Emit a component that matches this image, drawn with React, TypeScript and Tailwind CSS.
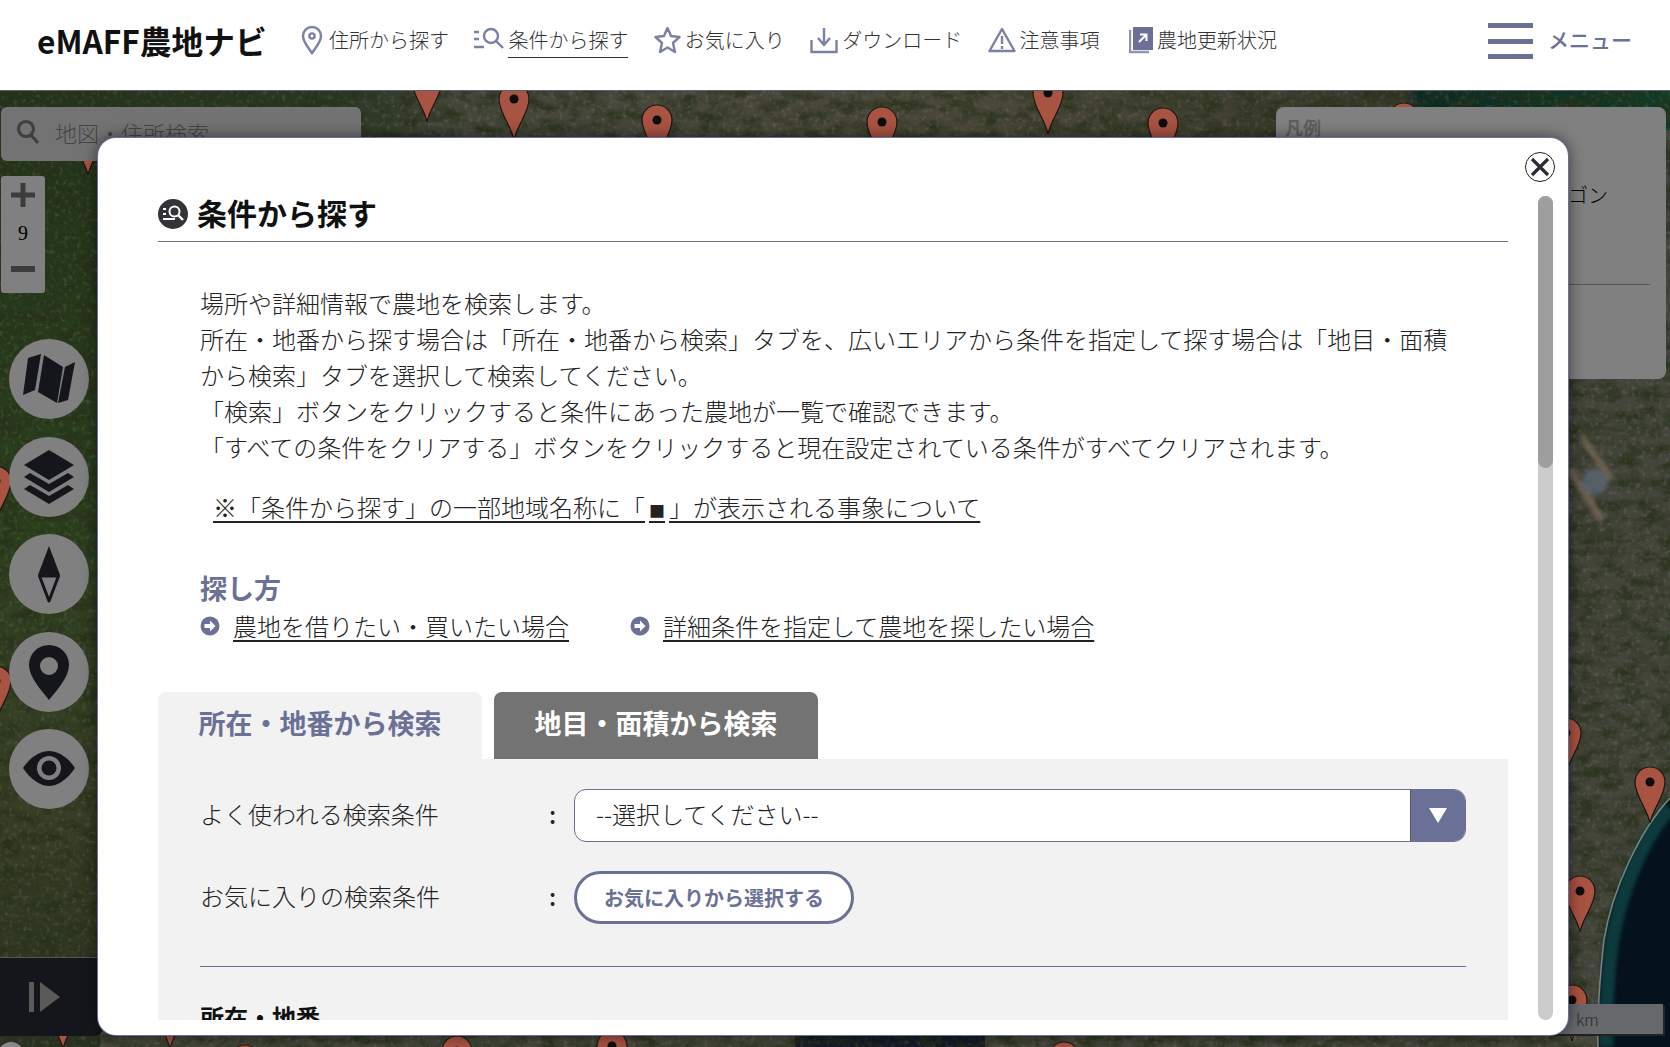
import React from 'react';

const PURPLE = '#6b7096';

// map pins, x / y of the dot
const pins = [
  [427, 81], [514, 99], [657, 120], [882, 122], [1048, 93], [1163, 123], [1404, 118],
  [88, 134], [-4, 481], [-4, 681], [1650, 782], [1580, 891], [1566, 733], [1572, 1000],
  [63, 1008], [170, 1008], [245, 1060], [457, 1051], [612, 1046], [1064, 1057],
];

const MapBackground = () => (
  <svg className="absolute left-0 top-0 w-full h-full" viewBox="0 0 1670 1047" preserveAspectRatio="none">
    <defs>
      <filter id="terrain" x="0" y="0" width="100%" height="100%">
        <feTurbulence type="fractalNoise" baseFrequency="0.05 0.09" numOctaves="5" seed="8" />
        <feColorMatrix type="matrix" values="0 0 0 0 0.02  0 0 0 0 0.03  0 0 0 0 0.01  2.6 0 0 0 -1.0" />
      </filter>
      <filter id="speck" x="0" y="0" width="100%" height="100%">
        <feTurbulence type="fractalNoise" baseFrequency="0.22" numOctaves="3" seed="3" />
        <feColorMatrix type="matrix" values="0 0 0 0 0.7  0 0 0 0 0.72  0 0 0 0 0.6  1.8 0 0 0 -0.95" />
      </filter>
      <filter id="soft"><feGaussianBlur stdDeviation="2" /></filter>
      <linearGradient id="top" x1="0" y1="0" x2="1" y2="0">
        <stop offset="0" stopColor="#24331c" />
        <stop offset="0.2" stopColor="#2a3622" />
        <stop offset="0.28" stopColor="#45463b" />
        <stop offset="0.6" stopColor="#4a4739" />
        <stop offset="0.84" stopColor="#37382a" />
        <stop offset="0.85" stopColor="#0b2a22" />
        <stop offset="1" stopColor="#123a24" />
      </linearGradient>
      <linearGradient id="left" x1="0" y1="0" x2="0" y2="1">
        <stop offset="0" stopColor="#223219" />
        <stop offset="0.45" stopColor="#2a3f1c" />
        <stop offset="0.75" stopColor="#383e26" />
        <stop offset="1" stopColor="#283120" />
      </linearGradient>
    </defs>
    <rect x="0" y="91" width="1670" height="956" fill="url(#left)" />
    <rect x="0" y="91" width="1670" height="48" fill="url(#top)" />
    <rect x="1400" y="130" width="270" height="917" fill="#43443a" />
    <rect x="100" y="1030" width="1570" height="17" fill="#45473c" />
    <rect x="795" y="1034" width="190" height="13" fill="#141a26" />
    <rect x="0" y="91" width="1670" height="956" filter="url(#terrain)" opacity="0.8" />
    <rect x="0" y="91" width="1670" height="956" filter="url(#speck)" opacity="0.22" />
    <path d="M1670 798 C1640 830 1612 890 1604 940 C1600 975 1597 1010 1598 1047 L1670 1047 Z" fill="#05111c" />
    <path d="M1670 808 C1644 836 1620 892 1612 942 C1607 977 1606 1012 1606 1047" fill="none" stroke="#0f3a3e" strokeWidth="14" filter="url(#soft)" />
    <path d="M1670 798 C1640 830 1612 890 1604 940 C1600 975 1597 1010 1598 1047" fill="none" stroke="#76847a" strokeWidth="1.6" />
    <g filter="url(#soft)" opacity="0.75">
      <path d="M1582 437 L1612 480 M1570 470 L1602 520" stroke="#7d6c5c" strokeWidth="7" />
      <circle cx="1595" cy="482" r="13" fill="#5d6b78" />
    </g>
    <circle cx="11" cy="1055" r="13" fill="#8a8a8a" />
    {pins.map(([x, y], i) => (
      <g key={i} transform={`translate(${x} ${y})`}>
        <path d="M0 41 C-3 26 -15 14 -15 0 A15 15 0 0 1 15 0 C15 14 3 26 0 41 Z" fill="#a95342" stroke="#1c1512" strokeWidth="1.2" />
        <circle cx="0" cy="0" r="4.5" fill="#0d0d0d" />
      </g>
    ))}
    <rect x="0" y="0" width="1670" height="91" fill="#ffffff" />
  </svg>
);

const NavItem = ({ icon, label, active }: { icon: React.ReactNode; label: string; active?: boolean }) => (
  <div className="flex items-center gap-[4px] shrink-0">
    {icon}
    <span className={`text-[20px] leading-[34px] font-light text-[#333] ${active ? 'border-b border-[#333]' : 'border-b border-transparent'}`}>
      {label}
    </span>
  </div>
);

const navStroke = { fill: 'none', stroke: '#7b80a6', strokeWidth: 2.4 };

const PinIcon = () => (
  <svg width="22" height="30" viewBox="0 0 22 30" {...navStroke} className="mr-[2px]">
    <path d="M11 2 A9 9 0 0 1 20 11 C20 17 15 22 11 28 C7 22 2 17 2 11 A9 9 0 0 1 11 2 Z" />
    <circle cx="11" cy="11" r="2.6" />
  </svg>
);
const SearchLinesIcon = () => (
  <svg width="30" height="26" viewBox="0 0 30 26" {...navStroke}>
    <path d="M0 5 h5 M0 12 h5 M0 20 h10" />
    <circle cx="17" cy="9" r="7" />
    <path d="M22 14 l7 7" />
  </svg>
);
const StarIcon = () => (
  <svg width="27" height="28" viewBox="0 0 27 28" {...navStroke}>
    <path d="M13.5 2 L17 10 L25.5 11 L19 17 L21 26 L13.5 21.5 L6 26 L8 17 L1.5 11 L10 10 Z" strokeLinejoin="round" />
  </svg>
);
const DownloadIcon = () => (
  <svg width="28" height="28" viewBox="0 0 28 28" {...navStroke}>
    <path d="M1.5 14 V26 H26.5 V14" />
    <path d="M14 2 V18 M8 12 L14 19 L20 12" />
  </svg>
);
const WarnIcon = () => (
  <svg width="28" height="26" viewBox="0 0 28 26" {...navStroke}>
    <path d="M14 2 L26.5 24 H1.5 Z" strokeLinejoin="round" />
    <path d="M14 9 V17 M14 19 V22" />
  </svg>
);
const UpdateIcon = () => (
  <svg width="24" height="27" viewBox="0 0 24 27" className="ml-[4px]">
    <path d="M1 3 V25 H20" fill="none" stroke="#8f93b2" strokeWidth="2.4" />
    <rect x="4" y="0" width="20" height="23" fill={PURPLE} />
    <path d="M10 15 L17 8 M11 7.5 H17.5 V14" fill="none" stroke="#fff" strokeWidth="2" />
  </svg>
);

const CircleBtn = ({ children }: { children: React.ReactNode }) => (
  <div className="w-20 h-20 rounded-full bg-[#808080]">
    <svg width="80" height="80" viewBox="0 0 80 80" fill="#15161c">{children}</svg>
  </div>
);

const ArrowBullet = () => (
  <svg width="20" height="20" viewBox="0 0 20 20" className="shrink-0">
    <circle cx="10" cy="10" r="9.5" fill={PURPLE} />
    <path d="M4.5 8 H10 V4.5 L15.5 10 L10 15.5 V12 H4.5 Z" fill="#fff" />
  </svg>
);

const App = () => {
  return (
    <div className="relative w-[1670px] h-[1047px] overflow-hidden bg-[#2a3322] font-['Noto_Sans_CJK_JP','Noto_Sans',sans-serif] text-[#222]">
      <MapBackground />

      {/* header */}
      <header className="relative z-20 h-[91px] bg-white border-b border-[#5d6070] flex items-center pl-[37px] pr-[38px] pb-[10px]">
        <div className="text-[31.7px] font-bold leading-[44px] text-[#111] w-[264px] shrink-0 whitespace-nowrap">eMAFF農地ナビ</div>
        <nav className="flex items-center gap-[25.4px]">
          <NavItem icon={<PinIcon />} label="住所から探す" />
          <NavItem icon={<SearchLinesIcon />} label="条件から探す" active />
          <NavItem icon={<StarIcon />} label="お気に入り" />
          <NavItem icon={<DownloadIcon />} label="ダウンロード" />
          <NavItem icon={<WarnIcon />} label="注意事項" />
          <NavItem icon={<UpdateIcon />} label="農地更新状況" />
        </nav>
        <div className="ml-auto flex items-center gap-[15px]">
          <div className="w-[45px] flex flex-col gap-[10.5px] mt-[2px]">
            <div className="h-[5px] bg-[#6b7096]" />
            <div className="h-[5px] bg-[#6b7096]" />
            <div className="h-[5px] bg-[#6b7096]" />
          </div>
          <span className="text-[21px] font-medium text-[#6b7096]">メニュー</span>
        </div>
      </header>

      {/* map controls */}
      <div className="absolute left-[1px] top-[107px] w-[360px] h-[54px] rounded-[6px] bg-[#737373] flex items-start pt-[11px] pl-[15px] gap-[15px]">
        <svg width="24" height="26" viewBox="0 0 24 26" fill="none" stroke="#3f3f3f" strokeWidth="3.2" className="mt-[1px]">
          <circle cx="10" cy="10" r="7.5" />
          <path d="M15 16 L22 24" />
        </svg>
        <span className="text-[22px] leading-[28px] font-light text-[#454545]">地図・住所検索</span>
      </div>

      <div className="absolute left-[1px] top-[176px] w-[44px] h-[117px] rounded-[3px] bg-[#808080] flex flex-col items-center pt-[7px]">
        <svg width="24" height="24" viewBox="0 0 24 24" fill="#3c3c3c"><path d="M9.5 0 H14.5 V9.5 H24 V14.5 H14.5 V24 H9.5 V14.5 H0 V9.5 H9.5 Z" /></svg>
        <div className="font-['Liberation_Serif',serif] text-[20px] leading-[24px] mt-[14px] text-black">9</div>
        <div className="w-[24px] h-[6px] bg-[#3c3c3c] mt-[21px]" />
      </div>

      <div className="absolute left-[9px] top-[339px] flex flex-col gap-[17.5px]">
        <CircleBtn>
          <path d="M14 56 L19 19 L32 15 L26 51 Z M35 16 L54 28 L48 64 L29 53 Z M56 28 L66 23 L59 61 L49 64 Z" />
        </CircleBtn>
        <CircleBtn>
          <path d="M40 13 L65 28 L40 43 L15 28 Z M15 40 L21 36 L40 47 L59 36 L65 40 L40 55 Z M15 52 L21 48 L40 59 L59 48 L65 52 L40 67 Z" />
        </CircleBtn>
        <CircleBtn>
          <path d="M40 12 L51 41 L29 41 Z" />
          <path d="M30.5 42 H49.5 L40 67 Z" fill="none" stroke="#15161c" strokeWidth="3" strokeLinejoin="round" />
        </CircleBtn>
        <CircleBtn>
          <path fillRule="evenodd" d="M40 13 A20 20 0 0 1 60 33 C60 45 48 58 40 68 C32 58 20 45 20 33 A20 20 0 0 1 40 13 Z M40 25 A9 9 0 1 0 40 43 A9 9 0 0 0 40 25 Z" />
        </CircleBtn>
        <CircleBtn>
          <path d="M14 39 C22 27 32 22 40 22 C48 22 58 27 66 39 C58 51 48 57 40 57 C32 57 22 51 14 39 Z" />
          <circle cx="40" cy="39" r="12" fill="#808080" />
          <circle cx="40" cy="39" r="7.5" />
        </CircleBtn>
      </div>

      <div className="absolute left-0 top-[957px] w-[103px] h-[79px] bg-[#15161c] border-t border-[#555] rounded-br-[8px] flex items-center pl-[29px] gap-[6px]">
        <div className="w-[5px] h-[30px] bg-[#5a5a5a]" />
        <svg width="20" height="30" viewBox="0 0 20 30" fill="#5a5a5a"><path d="M0 0 L20 15 L0 30 Z" /></svg>
      </div>

      {/* legend behind the dialog */}
      <div className="absolute left-[1276px] top-[107px] w-[390px] h-[272px] rounded-[8px] bg-[#808080] pl-[9px] pt-[7px]">
        <div className="text-[18px] leading-[26px] font-bold text-[#5e5e5e]">凡例</div>
        <div className="text-[20px] leading-[30px] text-black font-light pl-[283px] mt-[40px] whitespace-nowrap">ゴン</div>
        <div className="w-[365px] border-b border-[#555] mt-[74px]" />
      </div>

      {/* scale */}
      <div className="absolute left-[1500px] top-[1004px] w-[163px] h-[30px] bg-[#66686c] shadow-[2px_2px_0_#222] text-[16px] leading-[30px] text-[#2a2a2a] pl-[76px] font-light">
        km
      </div>

      {/* dialog */}
      <div className="absolute z-10 left-[98px] top-[138px] w-[1470px] h-[897px] bg-white rounded-[18px] shadow-[0_0_0_1px_#6b7096,0_0_16px_rgba(0,0,0,0.6)] flex gap-[30px] pl-[60px] pr-[15px] pt-[50px] pb-[15px]">
        <div className="absolute right-[13px] top-[14px] w-[30px] h-[30px] rounded-full border border-[#222] bg-white flex items-center justify-center">
          <svg width="20" height="20" viewBox="0 0 20 20" stroke="#2b2c36" strokeWidth="3.2"><path d="M2 2 L18 18 M18 2 L2 18" /></svg>
        </div>

        <div className="w-[1350px] overflow-hidden pt-[11px]">
          <div className="flex items-center gap-[9px] pb-[12px] border-b border-[#6f7388] box-content h-[30px]">
            <svg width="30" height="30" viewBox="0 0 30 30">
              <circle cx="15" cy="15" r="15" fill="#333338" />
              <path d="M5 10 h3 M5 15 h3 M5 20 h12" stroke="#fff" strokeWidth="1.8" />
              <circle cx="16.5" cy="12.5" r="5" fill="none" stroke="#fff" strokeWidth="2" />
              <path d="M20 16 L25 21" stroke="#fff" strokeWidth="2.4" />
            </svg>
            <h1 className="text-[30px] leading-[44px] mb-[4px] font-bold text-[#111]">条件から探す</h1>
          </div>

          <div className="px-[42px] mt-[43px] text-[24px] leading-[36px] font-light text-[#222]">
            <p>場所や詳細情報で農地を検索します。</p>
            <p>所在・地番から探す場合は「所在・地番から検索」タブを、広いエリアから条件を指定して探す場合は「地目・面積から検索」タブを選択して検索してください。</p>
            <p>「検索」ボタンをクリックすると条件にあった農地が一覧で確認できます。</p>
            <p>「すべての条件をクリアする」ボタンをクリックすると現在設定されている条件がすべてクリアされます。</p>
            <p className="mt-[24px] pl-[13px]">
              <span className="underline underline-offset-[4px] [text-decoration-skip-ink:none]">
                ※「条件から探す」の一部地域名称に「<span className="px-[4px] text-[16px] leading-none">■</span>」が表示される事象について
              </span>
            </p>
            <h2 className="mt-[45px] mb-[2px] text-[27px] font-bold text-[#6b7096]">探し方</h2>
            <div className="flex items-center">
              <ArrowBullet />
              <span className="ml-[13px] underline underline-offset-[4px]">農地を借りたい・買いたい場合</span>
              <span className="ml-[61px]"><ArrowBullet /></span>
              <span className="ml-[13px] underline underline-offset-[4px]">詳細条件を指定して農地を探したい場合</span>
            </div>
          </div>

          <div className="flex gap-[12px] mt-[48px]">
            <div className="w-[324px] h-[67px] bg-[#f2f2f2] rounded-t-[8px] pt-[13px] text-center text-[27px] leading-[36px] font-bold text-[#6b7096]">所在・地番から検索</div>
            <div className="w-[324px] h-[67px] bg-[#737373] rounded-t-[8px] pt-[13px] text-center text-[27px] leading-[36px] font-bold text-white">地目・面積から検索</div>
          </div>

          <div className="bg-[#f2f2f2] px-[42px] pt-[30px] pb-[40px] text-[24px] leading-[36px] font-light">
            <div className="grid grid-cols-[344px_30px_1fr] items-center">
              <div className="pb-[3px]">よく使われる検索条件</div>
              <div className="pl-[5px] font-medium pb-[3px]">:</div>
              <div className="h-[53px] flex rounded-[12px] border border-[#6b7096] bg-white overflow-hidden">
                <div className="flex-1 pl-[21px] leading-[47px]">--選択してください--</div>
                <div className="w-[55px] bg-[#6b7096] border-l border-[#555] flex items-center justify-center">
                  <svg width="18" height="15" viewBox="0 0 18 15" fill="#fff"><path d="M0 0 H18 L9 15 Z" /></svg>
                </div>
              </div>
            </div>
            <div className="grid grid-cols-[344px_30px_1fr] items-center mt-[29px]">
              <div className="pb-[4px]">お気に入りの検索条件</div>
              <div className="pl-[5px] font-medium pb-[3px]">:</div>
              <div className="w-[280px] h-[53px] rounded-full border-[3px] border-[#6b7096] bg-white flex items-center justify-center text-[20px] font-bold text-[#6b7096]">お気に入りから選択する</div>
            </div>
            <div className="border-b border-[#6b7096] mt-[42px]" />
            <div className="mt-[32px] font-bold text-[#111]">所在・地番</div>
          </div>
        </div>

        {/* scrollbar */}
        <div className="w-[15px] h-[824px] mt-[8px] rounded-full bg-[#cbcbcb]">
          <div className="h-[272px] rounded-full bg-[#9e9e9e]" />
        </div>
      </div>
    </div>
  );
};

export default App;
